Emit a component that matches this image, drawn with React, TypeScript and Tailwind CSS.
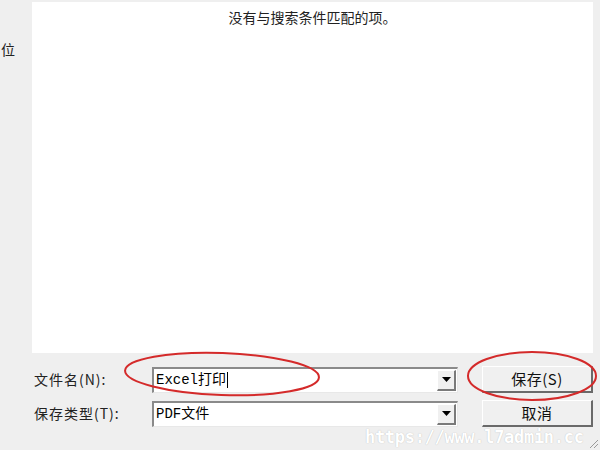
import React from "react";

const font = { fontFamily: '"Noto Sans CJK SC", "Noto Sans", sans-serif' };
const mono = { fontFamily: '"Liberation Mono", "Noto Sans CJK SC", monospace' };

function Arrow() {
  return (
    <div className="w-[19px] h-full bg-[#f0f0f0] border-t border-l border-t-white border-l-white border-b-2 border-r-2 border-b-[#7a7a7a] border-r-[#7a7a7a] flex items-center justify-center">
      <svg width="9" height="5" viewBox="0 0 9 5">
        <polygon points="0,0 9,0 4.5,5" fill="#000" />
      </svg>
    </div>
  );
}

function Combo({ text, caret }: { text: string; caret?: boolean }) {
  return (
    <div className="w-[306px] h-[26px] bg-white border-t-2 border-l-2 border-t-[#8a8a8a] border-l-[#8a8a8a] border-b border-r border-b-[#e8e8e8] border-r-[#e8e8e8] flex items-stretch p-[1px]">
      <div className="flex-1 flex items-center pl-[1px] text-[14px] text-black leading-none" style={mono}>
        <span>{text}</span>
        {caret && <span className="w-px h-[16px] bg-black ml-[1px]" />}
      </div>
      <Arrow />
    </div>
  );
}

function Btn({ text }: { text: string }) {
  return (
    <div className="w-[111px] h-[27px] bg-[#f0f0f0] border-t border-l border-t-white border-l-white border-b-2 border-r-2 border-b-[#6a6a6a] border-r-[#6a6a6a] flex items-center justify-center text-[15px] text-[#111] tracking-[0.5px]" style={font}>
      {text}
    </div>
  );
}

export default function App() {
  return (
    <div className="w-[600px] h-[450px] bg-[#efefef] relative overflow-hidden" style={font}>
      <div className="flex pt-[2px] h-[353px]">
        <div className="w-[32px] pt-[37px] pl-[1px] text-[14px] text-[#222] leading-[20px]">位</div>
        <div className="w-[561px] bg-white flex justify-center pt-[5px]">
          <span className="text-[14px] text-[#222] leading-[20px]">没有与搜索条件匹配的项。</span>
        </div>
      </div>
      <div className="flex flex-col gap-[7px] pt-[13px]">
        <div className="flex items-center">
          <div className="w-[152px] pl-[34px] text-[14px] text-[#222] tracking-[1px]">文件名(N):</div>
          <Combo text="Excel打印" caret />
          <div className="w-[24px]" />
          <Btn text="保存(S)" />
        </div>
        <div className="flex items-center">
          <div className="w-[152px] pl-[34px] text-[14px] text-[#222] tracking-[1px]">保存类型(T):</div>
          <Combo text="PDF文件" />
          <div className="w-[24px]" />
          <Btn text="取消" />
        </div>
      </div>
      <svg className="absolute left-0 top-0 pointer-events-none" width="600" height="450">
        <ellipse cx="222" cy="374" rx="97" ry="21" fill="none" stroke="#d42a2a" strokeWidth="2" transform="rotate(2 222 374)" />
        <ellipse cx="532" cy="376" rx="64" ry="24" fill="none" stroke="#d42a2a" strokeWidth="2" />
        <path d="M590 448 L598 440 M594 448 L598 444" stroke="#9a9a9a" strokeWidth="1" />
      </svg>
      <div className="absolute left-[365px] top-[427px] text-[17px] leading-[20px] font-bold text-white whitespace-nowrap tracking-[-0.3px]" style={{ fontFamily: '"DejaVu Sans Mono", monospace', textShadow: "0 0 1px rgba(0,0,0,0.25)" }}>
        https://www.l7admin.cc
      </div>
    </div>
  );
}
